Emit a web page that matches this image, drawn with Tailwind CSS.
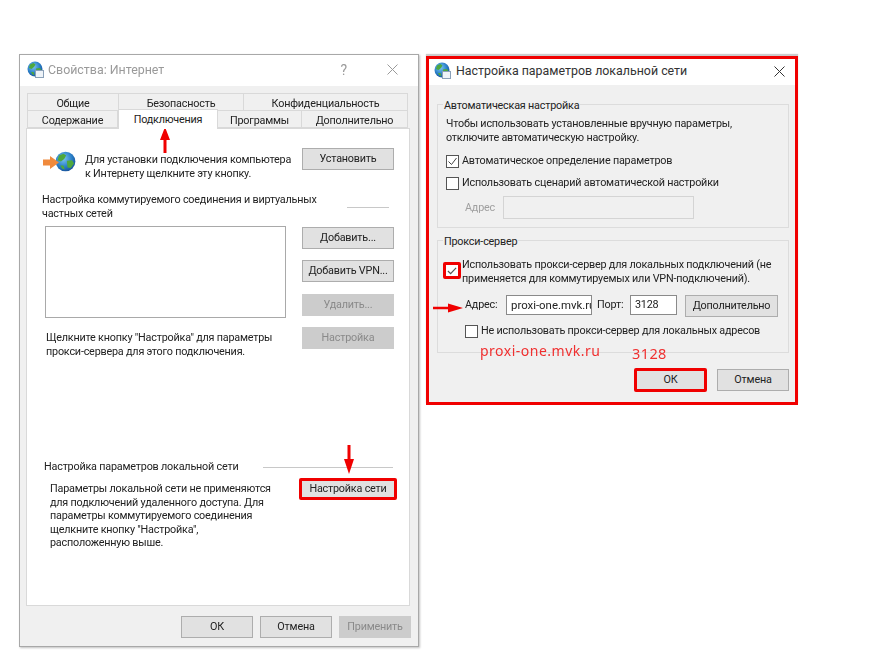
<!DOCTYPE html>
<html lang="ru">
<head>
<meta charset="UTF-8">
<title>Свойства: Интернет</title>
<script src="https://cdn.jsdelivr.net/npm/@tailwindcss/browser@4"></script>
</head>
<body class="bg-white">
<div class="relative w-[874px] h-[661px] overflow-hidden font-['Roboto',sans-serif] text-[10.8px] tracking-[-0.2px] leading-[14px] text-[#222] blur-[0.4px]">

  <!-- shared globe icon -->
  <svg class="absolute w-0 h-0">
    <defs>
      <radialGradient id="sea" cx="40%" cy="35%" r="70%"><stop offset="0" stop-color="#7cc6f0"/><stop offset="0.6" stop-color="#2a7fc8"/><stop offset="1" stop-color="#174f96"/></radialGradient>
      <symbol id="globe" viewBox="0 0 16 16">
        <circle cx="8" cy="8" r="7.5" fill="url(#sea)"/>
        <path d="M3 3.5 6.5 2 8.5 3.5 7 6 4.5 8 2 7ZM9 7.5 13 7 14.5 9.5 12 13 9.5 12.5ZM4 11 6.5 11 7.5 14 5.5 13.6Z" fill="#4fa83d"/>
      </symbol>
    </defs>
  </svg>

  <!-- Internet properties window -->
  <section class="absolute left-[19px] top-[54px] w-[400px] h-[593px] bg-[#f0f0f0] border border-[#a8a8a8] shadow-[1px_1px_2px_rgba(0,0,0,0.25)]">
    <header class="h-[31px] bg-white flex items-center pl-[7px] pb-[2px]">
      <span class="relative w-[18px] h-[18px] shrink-0">
        <svg class="w-[16px] h-[16px]"><use href="#globe"/></svg>
        <span class="absolute right-[1px] bottom-[1px] w-[9px] h-[8px] bg-[#eef3f8] border border-[#8aa0b8]"></span>
      </span>
      <h1 class="ml-[3px] text-[12.4px] tracking-normal text-[#9a9a9a]">Свойства: Интернет</h1>
      <span class="ml-auto mr-[71px] text-[14px] text-[#9a9a9a]">?</span>
      <svg class="w-[11px] h-[11px] absolute right-[20px] top-[9px]" viewBox="0 0 11 11" fill="none" stroke="#9a9a9a"><path d="M.5.5l10 10M10.5.5l-10 10"/></svg>
    </header>

    <div class="ml-[7px] mt-[7px] w-[381px] text-center">
      <div class="flex h-[18px] leading-[19px]">
        <div class="w-[92px] bg-[#f0f0f0] border border-[#d9d9d9]">Общие</div>
        <div class="w-[125px] bg-[#f0f0f0] border border-l-0 border-[#d9d9d9]">Безопасность</div>
        <div class="flex-1 bg-[#f0f0f0] border border-l-0 border-[#d9d9d9]">Конфиденциальность</div>
      </div>
      <div class="flex h-[17px] leading-[19px]">
        <div class="w-[91px] border border-t-0 border-[#d9d9d9]">Содержание</div>
        <div class="relative z-10 w-[100px] h-[20px] -mt-[2px] bg-white border border-b-0 border-[#d9d9d9]">Подключения</div>
        <div class="w-[84px] border border-t-0 border-l-0 border-[#d9d9d9]">Программы</div>
        <div class="flex-1 border border-t-0 border-l-0 border-[#d9d9d9]">Дополнительно</div>
      </div>
    </div>

    <div class="ml-[6px] w-[384px] h-[478px] bg-white border border-[#d9d9d9] flex flex-col">
      <div class="flex mt-[19px]">
        <svg class="ml-[16px] mt-[3px] w-[33px] h-[21px] shrink-0" viewBox="0 0 33 21">
          <use href="#globe" x="12" y="0" width="21" height="21"/>
          <path d="M0 8.500h7V5l9 6.500-9 6.500v-3.500H0Z" fill="#f08a3c"/>
        </svg>
        <p class="ml-[9px] mt-[5px] w-[217px] whitespace-nowrap">Для установки подключения компьютера<br>к Интернету щелкните эту кнопку.</p>
        <button class="w-[92px] h-[22px] bg-[#e1e1e1] border border-[#adadad]">Установить</button>
      </div>

      <div class="flex mt-[12px] ml-[15px]">
        <p class="w-[290px] whitespace-nowrap">Настройка коммутируемого соединения и виртуальных<br>частных сетей</p>
        <div class="ml-[15px] mt-[14px] w-[42px] h-px bg-[#c8c8c8]"></div>
      </div>

      <div class="flex mt-[5px]">
        <div class="ml-[18px] w-[241px]">
          <div class="h-[92px] border border-[#a9a9a9]"></div>
          <p class="ml-px mt-[13px] whitespace-nowrap">Щелкните кнопку "Настройка" для параметры<br>прокси-сервера для этого подключения.</p>
        </div>
        <div class="ml-[16px] mt-px w-[92px] flex flex-col gap-[11.3px]">
          <button class="h-[22px] bg-[#e1e1e1] border border-[#adadad]">Добавить...</button>
          <button class="h-[22px] bg-[#e1e1e1] border border-[#adadad]">Добавить VPN...</button>
          <button class="h-[22px] bg-[#cccccc] text-[#8a8a8a]">Удалить...</button>
          <button class="h-[22px] bg-[#cccccc] text-[#8a8a8a]">Настройка</button>
        </div>
      </div>

      <div class="flex items-center mt-[101px] ml-[17px]">
        <h2>Настройка параметров локальной сети</h2>
        <div class="ml-auto mr-[16px] w-[130px] h-px bg-[#c8c8c8]"></div>
      </div>
      <div class="flex mt-[4px] ml-[23px]">
        <p class="w-[230px] mt-[4px] leading-[13.5px] whitespace-nowrap">Параметры локальной сети не применяются<br>для подключений удаленного доступа. Для<br>параметры коммутируемого соединения<br>щелкните кнопку "Настройка",<br>расположенную выше.</p>
        <button class="ml-[19px] w-[98px] h-[22px] bg-[#e1e1e1] border-[3px] border-[#f00000] rounded-[2px]">Настройка сети</button>
      </div>
    </div>

    <footer class="flex justify-end gap-[7px] mt-[10px] mr-[7px]">
      <button class="w-[72px] h-[22px] bg-[#e1e1e1] border border-[#adadad]">ОК</button>
      <button class="w-[72px] h-[22px] bg-[#e1e1e1] border border-[#adadad]">Отмена</button>
      <button class="w-[72px] h-[22px] bg-[#cccccc] text-[#8a8a8a]">Применить</button>
    </footer>
  </section>

  <!-- LAN settings window -->
  <section class="absolute left-[426px] top-[56px] w-[372px] h-[349px] bg-[#f0f0f0] border-[3px] border-[#f00000] shadow-[0_-2px_1px_rgba(0,0,0,0.2)]">
    <header class="h-[26px] bg-white flex items-center pl-[5px] pb-[2px]">
      <span class="relative w-[18px] h-[18px] shrink-0">
        <svg class="w-[16px] h-[16px]"><use href="#globe"/></svg>
        <span class="absolute right-[1px] bottom-[1px] w-[9px] h-[8px] bg-[#eef3f8] border border-[#8aa0b8]"></span>
      </span>
      <h2 class="ml-[4px] text-[12.4px] tracking-normal text-[#333]">Настройка параметров локальной сети</h2>
      <svg class="ml-auto mr-[10px] w-[11px] h-[11px]" viewBox="0 0 11 11" fill="none" stroke="#333"><path d="M.5.5l10 10M10.5.5l-10 10"/></svg>
    </header>

    <div class="relative ml-[8px] mt-[19px] w-[352px] h-[124px] border border-[#dcdcdc]">
      <span class="absolute left-[5px] -top-[6px] px-px bg-[#f0f0f0]">Автоматическая настройка</span>
      <p class="ml-[8px] mt-[12px] whitespace-nowrap">Чтобы использовать установленные вручную параметры,<br>отключите автоматическую настройку.</p>
      <label class="flex items-center ml-[8px] mt-[9px]">
        <span class="w-[13px] h-[13px] bg-white border border-[#555] flex items-center justify-center">
          <svg class="w-[11px] h-[11px]" viewBox="0 0 11 11" fill="none" stroke="#444"><path d="M1.500 5.500l3 3 5-6.500"/></svg>
        </span>
        <span class="ml-[3px]">Автоматическое определение параметров</span>
      </label>
      <label class="flex items-center ml-[8px] mt-[8px]">
        <span class="w-[13px] h-[13px] bg-white border border-[#555]"></span>
        <span class="ml-[3px]">Использовать сценарий автоматической настройки</span>
      </label>
      <div class="flex items-center ml-[27px] mt-[6px] text-[#a0a0a0]">
        <span class="w-[38px]">Адрес</span>
        <div class="w-[191px] h-[23px] border border-[#d4d4d4]"></div>
      </div>
    </div>

    <div class="relative ml-[8px] mt-[12px] w-[352px] h-[113px] border border-[#dcdcdc]">
      <span class="absolute left-[5px] -top-[6px] px-px bg-[#f0f0f0]">Прокси-сервер</span>
      <div class="flex ml-[5px] mt-[17px]">
        <span class="mt-[4px] w-[18px] h-[17px] bg-white border-[3px] border-[#f00000] rounded-[2px] flex items-center justify-center shrink-0">
          <svg class="w-[10px] h-[10px]" viewBox="0 0 11 11" fill="none" stroke="#555" stroke-width="1.3"><path d="M1 5.500l3 3 6-6.500"/></svg>
        </span>
        <p class="ml-px whitespace-nowrap">Использовать прокси-сервер для локальных подключений (не<br>применяется для коммутируемых или VPN-подключений).</p>
      </div>
      <div class="flex items-center ml-[27px] mt-[7px]">
        <span class="w-[41px]">Адрес:</span>
        <div class="w-[86px] h-[20px] bg-white border border-[#8a8a8a] pl-[4px] text-[11.4px] tracking-normal leading-[18px] overflow-hidden whitespace-nowrap">proxi-one.mvk.ru</div>
        <span class="ml-[5px] w-[33px]">Порт:</span>
        <div class="w-[47px] h-[20px] bg-white border border-[#8a8a8a] pl-[4px] leading-[18px]">3128</div>
        <button class="ml-[8px] mt-[2px] w-[93px] h-[22px] bg-[#e1e1e1] border border-[#adadad]">Дополнительно</button>
      </div>
      <label class="flex items-center ml-[27px] mt-[7px]">
        <span class="w-[13px] h-[13px] bg-white border border-[#555]"></span>
        <span class="ml-[3px]">Не использовать прокси-сервер для локальных адресов</span>
      </label>
    </div>

    <div class="flex justify-end items-start gap-[10px] mt-[15px] mr-[6px]">
      <button class="w-[73px] h-[24px] bg-[#e1e1e1] border-[3px] border-[#f00000] rounded-[2px]">ОК</button>
      <button class="mt-px w-[72px] h-[22px] bg-[#e1e1e1] border border-[#adadad]">Отмена</button>
    </div>
  </section>

  <!-- annotations drawn over the screenshot -->
  <span class="absolute left-[480px] top-[342px] text-[14px] leading-[18px] tracking-[0.5px] text-[#f03030] font-['Noto_Sans',sans-serif]">proxi-one.mvk.ru</span>
  <span class="absolute left-[632px] top-[344px] text-[14.5px] leading-[18px] tracking-[0.4px] text-[#f03030] font-['Noto_Sans',sans-serif]">3128</span>
  <svg class="absolute left-[159px] top-[127px] w-[12px] h-[26px]" viewBox="0 0 12 26" fill="#f00000"><path d="M6 0 11 13H7.500V26H4.500V13H1Z"/></svg>
  <svg class="absolute left-[343px] top-[445px] w-[12px] h-[29px]" viewBox="0 0 12 29" fill="#f00000"><path d="M6 29 11 14H7.500V0H4.500V14H1Z"/></svg>
  <svg class="absolute left-[433px] top-[302px] w-[30px] h-[12px]" viewBox="0 0 30 12" fill="#f00000"><path d="M30 6 15 1.500V4.800H0V7.200H15V10.500Z"/></svg>
</div>
</body>
</html>
